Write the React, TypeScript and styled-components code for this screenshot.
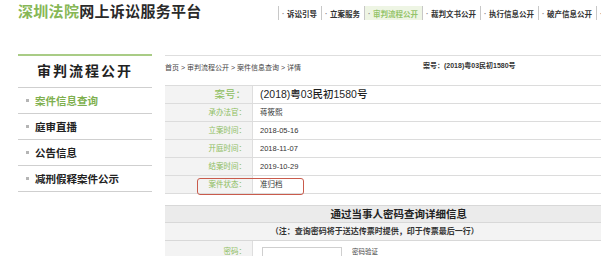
import styled, { createGlobalStyle } from "styled-components";

const green = "#86b756";
const labelGreen = "#8dbd5e";
const font = `"Liberation Sans", "Noto Sans CJK SC", sans-serif`;

const GlobalStyle = createGlobalStyle`
  html, body {
    margin: 0;
    padding: 0;
    background: #fff;
  }
  body {
    font-family: ${font};
    color: #333;
  }
`;

const navItems = [
  "诉讼引导",
  "立案服务",
  "审判流程公开",
  "裁判文书公开",
  "执行信息公开",
  "破产信息公开",
  "信访服务",
];

const sideItems = ["案件信息查询", "庭审直播", "公告信息", "减刑假释案件公示"];

const rows = [
  { label: "承办法官：", value: "蒋筱熙" },
  { label: "立案时间：", value: "2018-05-16" },
  { label: "开庭时间：", value: "2018-11-07" },
  { label: "结案时间：", value: "2019-10-29" },
];

const App = () => {
  return (
    <Page>
      <GlobalStyle />
      <Header>
        <Logo>
          <em>深圳法院</em>网上诉讼服务平台
        </Logo>
        <Nav>
          {navItems.map((item) => (
            <NavItem key={item} active={item === "审判流程公开"}>
              <Dot>·</Dot>
              {item}
            </NavItem>
          ))}
        </Nav>
      </Header>

      <Body>
        <Sidebar>
          <SideTitle>审判流程公开</SideTitle>
          {sideItems.map((item, i) => (
            <SideItem key={item} active={i === 0}>
              <Bullet />
              {item}
            </SideItem>
          ))}
        </Sidebar>

        <Main>
          <Crumbs>
            <Path>首页 &gt; 审判流程公开 &gt; 案件信息查询 &gt; 详情</Path>
            <CaseRef>案号：(2018)粤03民初1580号</CaseRef>
            <PrintButton />
          </Crumbs>

          <Table>
            <Row>
              <Label big>案号：</Label>
              <Value big>(2018)粤03民初1580号</Value>
            </Row>
            {rows.map((r) => (
              <Row key={r.label}>
                <Label>{r.label}</Label>
                <Value>{r.value}</Value>
              </Row>
            ))}
            <Row>
              <Label>案件状态：</Label>
              <Value>准归档</Value>
              <Highlight />
            </Row>

            <Spacer />
            <Heading>通过当事人密码查询详细信息</Heading>
            <Note>（注：查询密码将于送达传票时提供，印于传票最后一行）</Note>
            <PasswordRow>
              <Label>密码：</Label>
              <Value>
                <Input />
                <Small>密码验证</Small>
              </Value>
            </PasswordRow>
          </Table>
        </Main>
      </Body>
    </Page>
  );
};

const Page = styled.div`
  width: 601px;
  height: 256px;
  overflow: hidden;
  background: #fff;
`;

const Header = styled.div`
  display: flex;
  height: 54px;
`;

const Logo = styled.div`
  flex: 0 0 278px;
  padding: 3px 0 0 18px;
  box-sizing: border-box;
  font-size: 15px;
  line-height: 18px;
  letter-spacing: 0.3px;
  font-weight: 700;
  color: #2a2a2a;
  white-space: nowrap;

  em {
    font-style: normal;
    color: ${green};
  }
`;

const Nav = styled.div`
  display: flex;
  margin-top: 6px;
  height: 14px;
  border-left: 1px solid #c8c8c8;
`;

const NavItem = styled.div<{ active?: boolean }>`
  display: flex;
  align-items: center;
  padding: 0 4px 0 3px;
  border-right: 1px solid #c8c8c8;
  font-size: 7.5px;
  font-weight: 700;
  white-space: nowrap;
  color: ${(p) => (p.active ? "#95c46a" : "#333")};
  background: ${(p) => (p.active ? "#eef5e4" : "transparent")};
`;

const Dot = styled.span`
  display: inline-block;
  width: 3px;
  margin-right: 2px;
  color: #888;
`;

const Body = styled.div`
  display: flex;
`;

const Sidebar = styled.div`
  flex: 0 0 134px;
  margin-left: 18px;
  border-top: 2px solid #a9cc86;
  background: #fff;
`;

const SideTitle = styled.div`
  height: 31px;
  line-height: 31px;
  text-align: center;
  font-size: 14px;
  font-weight: 700;
  letter-spacing: 2px;
  color: #222;
  border-bottom: 1px solid #cfcfcf;
`;

const SideItem = styled.div<{ active?: boolean }>`
  display: flex;
  align-items: center;
  height: 25px;
  padding-left: 8px;
  border-bottom: 1px solid #cfcfcf;
  font-size: 10.5px;
  font-weight: 700;
  color: ${(p) => (p.active ? "#7fb04f" : "#222")};
`;

const Bullet = styled.span`
  width: 3px;
  height: 3px;
  margin-right: 6px;
  background: #b5b5b5;
`;

const Main = styled.div`
  flex: 0 0 460px;
  margin: 1px 0 0 13px;
  border-top: 1px solid #dedede;
`;

const Crumbs = styled.div`
  display: flex;
  align-items: flex-start;
  height: 29px;
  padding-top: 7px;
  box-sizing: border-box;
`;

const Path = styled.div`
  flex: 0 0 258px;
  font-size: 7px;
  line-height: 10px;
  color: #444;
`;

const CaseRef = styled.div`
  margin-top: -2px;
  font-size: 7px;
  line-height: 10px;
  font-weight: 700;
  color: #333;
  white-space: nowrap;
`;

const PrintButton = styled.div`
  width: 30px;
  height: 12px;
  margin: -1px 0 0 85px;
  border: 1px solid #bdbdbd;
  border-radius: 2px;
  background: #f4f4f4;
`;

const Table = styled.div`
  border-top: 1px solid #dcdcdc;
`;

const Row = styled.div`
  position: relative;
  display: grid;
  grid-template-columns: 88px 1fr;
  height: 18px;
  box-sizing: border-box;
  border-bottom: 1px solid #dcdcdc;
`;

const Label = styled.div<{ big?: boolean }>`
  padding-right: 6px;
  text-align: right;
  background: #f3f3f3;
  border-right: 1px solid #dedede;
  font-size: ${(p) => (p.big ? "10.5px" : "7.5px")};
  line-height: 17px;
  color: ${labelGreen};
  white-space: nowrap;
`;

const Value = styled.div<{ big?: boolean }>`
  display: flex;
  align-items: flex-start;
  padding-left: 7px;
  font-size: ${(p) => (p.big ? "10.5px" : "7.5px")};
  font-weight: ${(p) => (p.big ? 500 : 400)};
  line-height: 17px;
  color: ${(p) => (p.big ? "#1f1f1f" : "#333")};
  white-space: nowrap;
`;

const Highlight = styled.div`
  position: absolute;
  left: 32px;
  top: 2px;
  width: 107px;
  height: 17px;
  box-sizing: border-box;
  border: 1.5px solid #c95b4c;
  border-radius: 3px;
`;

const Spacer = styled.div`
  height: 11px;
`;

const Heading = styled.div`
  height: 18px;
  line-height: 17px;
  box-sizing: border-box;
  text-align: center;
  font-size: 10.5px;
  font-weight: 700;
  color: #222;
  background: #ebebeb;
  border-top: 1px solid #d8d8d8;
  border-bottom: 1px solid #d8d8d8;
`;

const Note = styled.div`
  height: 18px;
  line-height: 17px;
  box-sizing: border-box;
  padding-right: 48px;
  text-align: center;
  font-size: 8px;
  font-weight: 700;
  color: #333;
  background: #f3f3f3;
  border-bottom: 1px solid #d8d8d8;
`;

const PasswordRow = styled(Row)`
  height: 26px;

  & > div {
    padding-top: 2px;
  }
`;

const Input = styled.div`
  width: 78px;
  height: 16px;
  margin: 4px 10px 0 2px;
  border: 1px solid #cfcfcf;
  background: #fff;
`;

const Small = styled.span`
  font-size: 6.5px;
  color: #444;
`;

export default App;
